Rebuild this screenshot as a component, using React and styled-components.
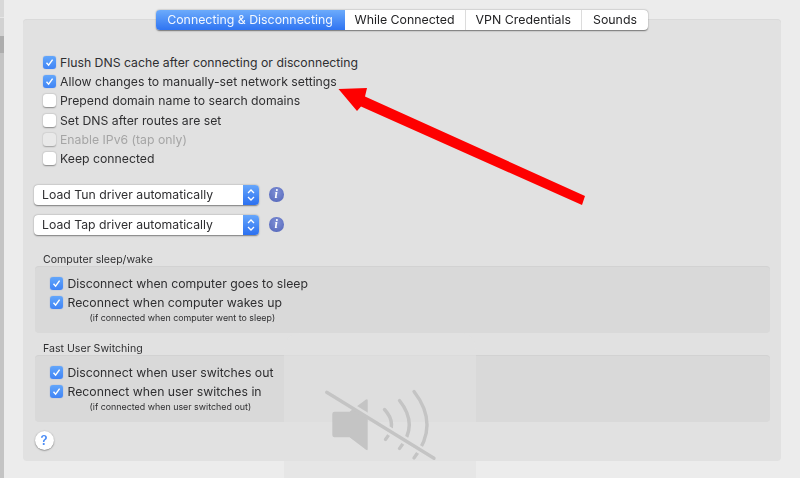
import React from 'react'
import styled, { createGlobalStyle } from 'styled-components'

const Global = createGlobalStyle`
  html, body { margin: 0; padding: 0; height: 478px; overflow: hidden; background: #ececec; }
  body { font-family: Inter, "Liberation Sans", sans-serif; color: #38383a; }
`

const Page = styled.div`
  position: relative;
  display: flex;
  width: 800px;
  height: 478px;
  overflow: hidden;
`

const Edge = styled.div`
  width: 3.5px;
  flex: none;
  background: linear-gradient(#d8d8d8 0 17px, #e6e6e6 17px 18px, #d2d2d2 18px 36px, #adadad 36px 53px, #c4c4c4 53px);
`

const Window = styled.div`
  flex: 1;
  padding: 10px 0 0 19.5px;
  filter: blur(0.45px);
`

const Tabs = styled.div`
  position: relative;
  z-index: 1;
  display: flex;
  width: 492.5px;
  height: 19.5px;
  margin: 0 0 -10.5px 132.5px;
  border-radius: 4px;
  background: #fff;
  box-shadow: 0 0.5px 1.5px rgba(0, 0, 0, 0.5);
`

const Tab = styled.div`
  display: flex;
  align-items: center;
  justify-content: center;
  width: ${p => p.$w}px;
  font-size: 12.35px;
  color: ${p => (p.$active ? '#f2f7ff' : '#222224')};
  background: ${p => (p.$active ? 'linear-gradient(#6cabfb, #2f74f2)' : 'transparent')};
  border-radius: ${p => (p.$active ? '4px 0 0 4px' : '0')};
  border-left: ${p => (p.$divided ? '1px solid #dcdcdc' : 'none')};
  box-sizing: border-box;
`

const Panel = styled.div`
  width: 758px;
  height: 442px;
  box-sizing: border-box;
  padding: 34px 0 0 11px;
  background: #e1e1e1;
  border-radius: 4px;
  box-shadow: inset 0 1px 0 #dadada;
`

const CheckList = styled.div`
  margin-left: 8.5px;
`

const Row = styled.div`
  display: flex;
  align-items: center;
  gap: 4.5px;
  height: ${p => p.$h || 19.2}px;
  font-size: 12.25px;
  color: ${p => (p.$disabled ? '#a5a5a5' : '#2f2f31')};
`

const Box = styled.span`
  display: flex;
  align-items: center;
  justify-content: center;
  width: 13px;
  height: 13px;
  flex: none;
  border-radius: 3px;
  background: ${p => (p.$checked ? 'linear-gradient(#62a6fb, #4084f5)' : p.$disabled ? '#ebebeb' : '#fff')};
  box-shadow: ${p => (p.$checked ? '0 0 1px rgba(40, 90, 200, 0.6)' : '0 0.5px 1.5px rgba(0, 0, 0, 0.4)')};
  opacity: ${p => (p.$disabled ? 0.75 : 1)};
`

const Selects = styled.div`
  display: flex;
  flex-direction: column;
  gap: 10px;
  margin-top: 16.5px;
`

const SelectRow = styled.div`
  display: flex;
  align-items: center;
  gap: 10px;
`

const Select = styled.div`
  display: flex;
  align-items: center;
  justify-content: space-between;
  width: 225px;
  height: 20px;
  padding-left: 8px;
  box-sizing: border-box;
  font-size: 12.25px;
  color: #2f2f31;
  background: #fff;
  border-radius: 4px;
  box-shadow: 0 0.5px 1.5px rgba(0, 0, 0, 0.45);
`

const Stepper = styled.span`
  display: flex;
  align-items: center;
  justify-content: center;
  width: 16px;
  height: 20px;
  border-radius: 0 4px 4px 0;
  background: linear-gradient(#66a6fb, #2b70f0);
`

const Info = styled.span`
  display: flex;
  align-items: center;
  justify-content: center;
  width: 14.5px;
  height: 14.5px;
  border-radius: 50%;
  background: radial-gradient(circle at 50% 35%, #7f90d6, #5264b8);
  color: #fff;
  font: italic bold 12px "Liberation Serif", serif;
`

const SectionLabel = styled.div`
  height: 14px;
  line-height: 16px;
  margin: ${p => p.$top}px 0 0 9px;
  font-size: 10.6px;
  color: #2f2f31;
`

const Group = styled.div`
  width: 735px;
  height: 67px;
  margin-left: 0.5px;
  padding: 7.5px 0 0 15.5px;
  box-sizing: border-box;
  background: #d9d9d9;
  border-radius: 4px;
  box-shadow: inset 0 1px 0 #d2d2d2;
`

const Note = styled.div`
  margin: 0 0 0 39.5px;
  height: 11px;
  line-height: 12px;
  font-size: 8.9px;
  color: #2f2f31;
`

const Help = styled.div`
  display: flex;
  align-items: center;
  justify-content: center;
  width: 19px;
  height: 19px;
  margin: 9px 0 0 0.5px;
  border-radius: 50%;
  background: #fff;
  box-shadow: 0 0.5px 1.5px rgba(0, 0, 0, 0.5);
  color: #4a8cf5;
  font-size: 13px;
  font-weight: 600;
`

const Hud = styled.div`
  position: absolute;
  left: 284px;
  top: 333px;
  width: 192px;
  height: 192px;
  border-radius: 16px;
  background: rgba(225, 225, 225, 0.58);
`

const Overlay = styled.svg`
  position: absolute;
  left: 0;
  top: 0;
  pointer-events: none;
`

const Tick = () => (
  <svg width="9" height="9" viewBox="0 0 9 9">
    <path d="M1.5 4.8 L3.6 7.2 L7.6 1.6" fill="none" stroke="#fff" strokeWidth="1.4" />
  </svg>
)

const Check = ({ checked, disabled, h, children }) => (
  <Row $disabled={disabled} $h={h}>
    <Box $checked={checked} $disabled={disabled}>{checked && <Tick />}</Box>
    <span>{children}</span>
  </Row>
)

const UpDown = () => (
  <svg width="10" height="14" viewBox="0 0 10 14">
    <path d="M2 5 L5 2 L8 5 M2 9 L5 12 L8 9" fill="none" stroke="#fff" strokeWidth="1.3" />
  </svg>
)

const DriverSelect = ({ children }) => (
  <SelectRow>
    <Select>
      {children}
      <Stepper><UpDown /></Stepper>
    </Select>
    <Info>i</Info>
  </SelectRow>
)

const SLASH = 'M326.7 392.3 L434 458.3'

// red annotation arrow and the muted speaker of the volume overlay
const Drawing = () => (
  <Overlay width="800" height="478" viewBox="0 0 800 478">
    <defs>
      <mask id="speakerCut" maskUnits="userSpaceOnUse" x="0" y="0" width="800" height="478">
        <rect width="800" height="478" fill="#fff" />
        <path d="M326.7 389.6 L434 455.6" stroke="#000" strokeWidth="4" />
      </mask>
      <mask id="waveCut" maskUnits="userSpaceOnUse" x="0" y="0" width="800" height="478">
        <rect width="800" height="478" fill="#fff" />
        <path d={SLASH} stroke="#000" strokeWidth="8" />
      </mask>
    </defs>
    <path
      mask="url(#speakerCut)"
      d="M334.5 411.7 H349.5 L366 399.5 Q367.7 398.5 367.7 400.5 V449 Q367.7 451 366 449.8 L349.5 437.3 H334.5 Q332.3 437.3 332.3 435 V414 Q332.3 411.7 334.5 411.7 Z"
      fill="#c4c4c4"
    />
    <g mask="url(#waveCut)" fill="none" stroke="#c4c4c4" strokeWidth="3.4" strokeLinecap="round">
      <path d="M384.5 409.5 Q398 424 385.5 439.5" />
      <path d="M399.5 400.5 Q419 425 399.5 448.5" />
      <path d="M414 391.5 Q440 425 414 458" />
    </g>
    <path d={SLASH} stroke="#c4c4c4" strokeWidth="3.4" strokeLinecap="round" />
    <path d="M338.5 89 L367 88 L365 96.5 L585 196 L582 205 L361 106.5 L357 111 Z" fill="#fe0000" />
  </Overlay>
)

export default function App() {
  return (
    <Page>
      <Global />
      <Edge />
      <Window>
        <Tabs>
          <Tab $w={189} $active>Connecting &amp; Disconnecting</Tab>
          <Tab $w={120}>While Connected</Tab>
          <Tab $w={116.5} $divided>VPN Credentials</Tab>
          <Tab $w={67} $divided>Sounds</Tab>
        </Tabs>
        <Panel>
          <CheckList>
            <Check checked>Flush DNS cache after connecting or disconnecting</Check>
            <Check checked>Allow changes to manually-set network settings</Check>
            <Check>Prepend domain name to search domains</Check>
            <Check>Set DNS after routes are set</Check>
            <Check disabled>Enable IPv6 (tap only)</Check>
            <Check>Keep connected</Check>
          </CheckList>
          <Selects>
            <DriverSelect>Load Tun driver automatically</DriverSelect>
            <DriverSelect>Load Tap driver automatically</DriverSelect>
          </Selects>
          <SectionLabel $top={17.3}>Computer sleep/wake</SectionLabel>
          <Group>
            <Check checked h={19.5}>Disconnect when computer goes to sleep</Check>
            <Check checked h={19.5}>Reconnect when computer wakes up</Check>
            <Note>(if connected when computer went to sleep)</Note>
          </Group>
          <SectionLabel $top={8}>Fast User Switching</SectionLabel>
          <Group>
            <Check checked h={19.5}>Disconnect when user switches out</Check>
            <Check checked h={19.5}>Reconnect when user switches in</Check>
            <Note>(if connected when user switched out)</Note>
          </Group>
          <Help>?</Help>
        </Panel>
      </Window>
      <Hud />
      <Drawing />
    </Page>
  )
}
